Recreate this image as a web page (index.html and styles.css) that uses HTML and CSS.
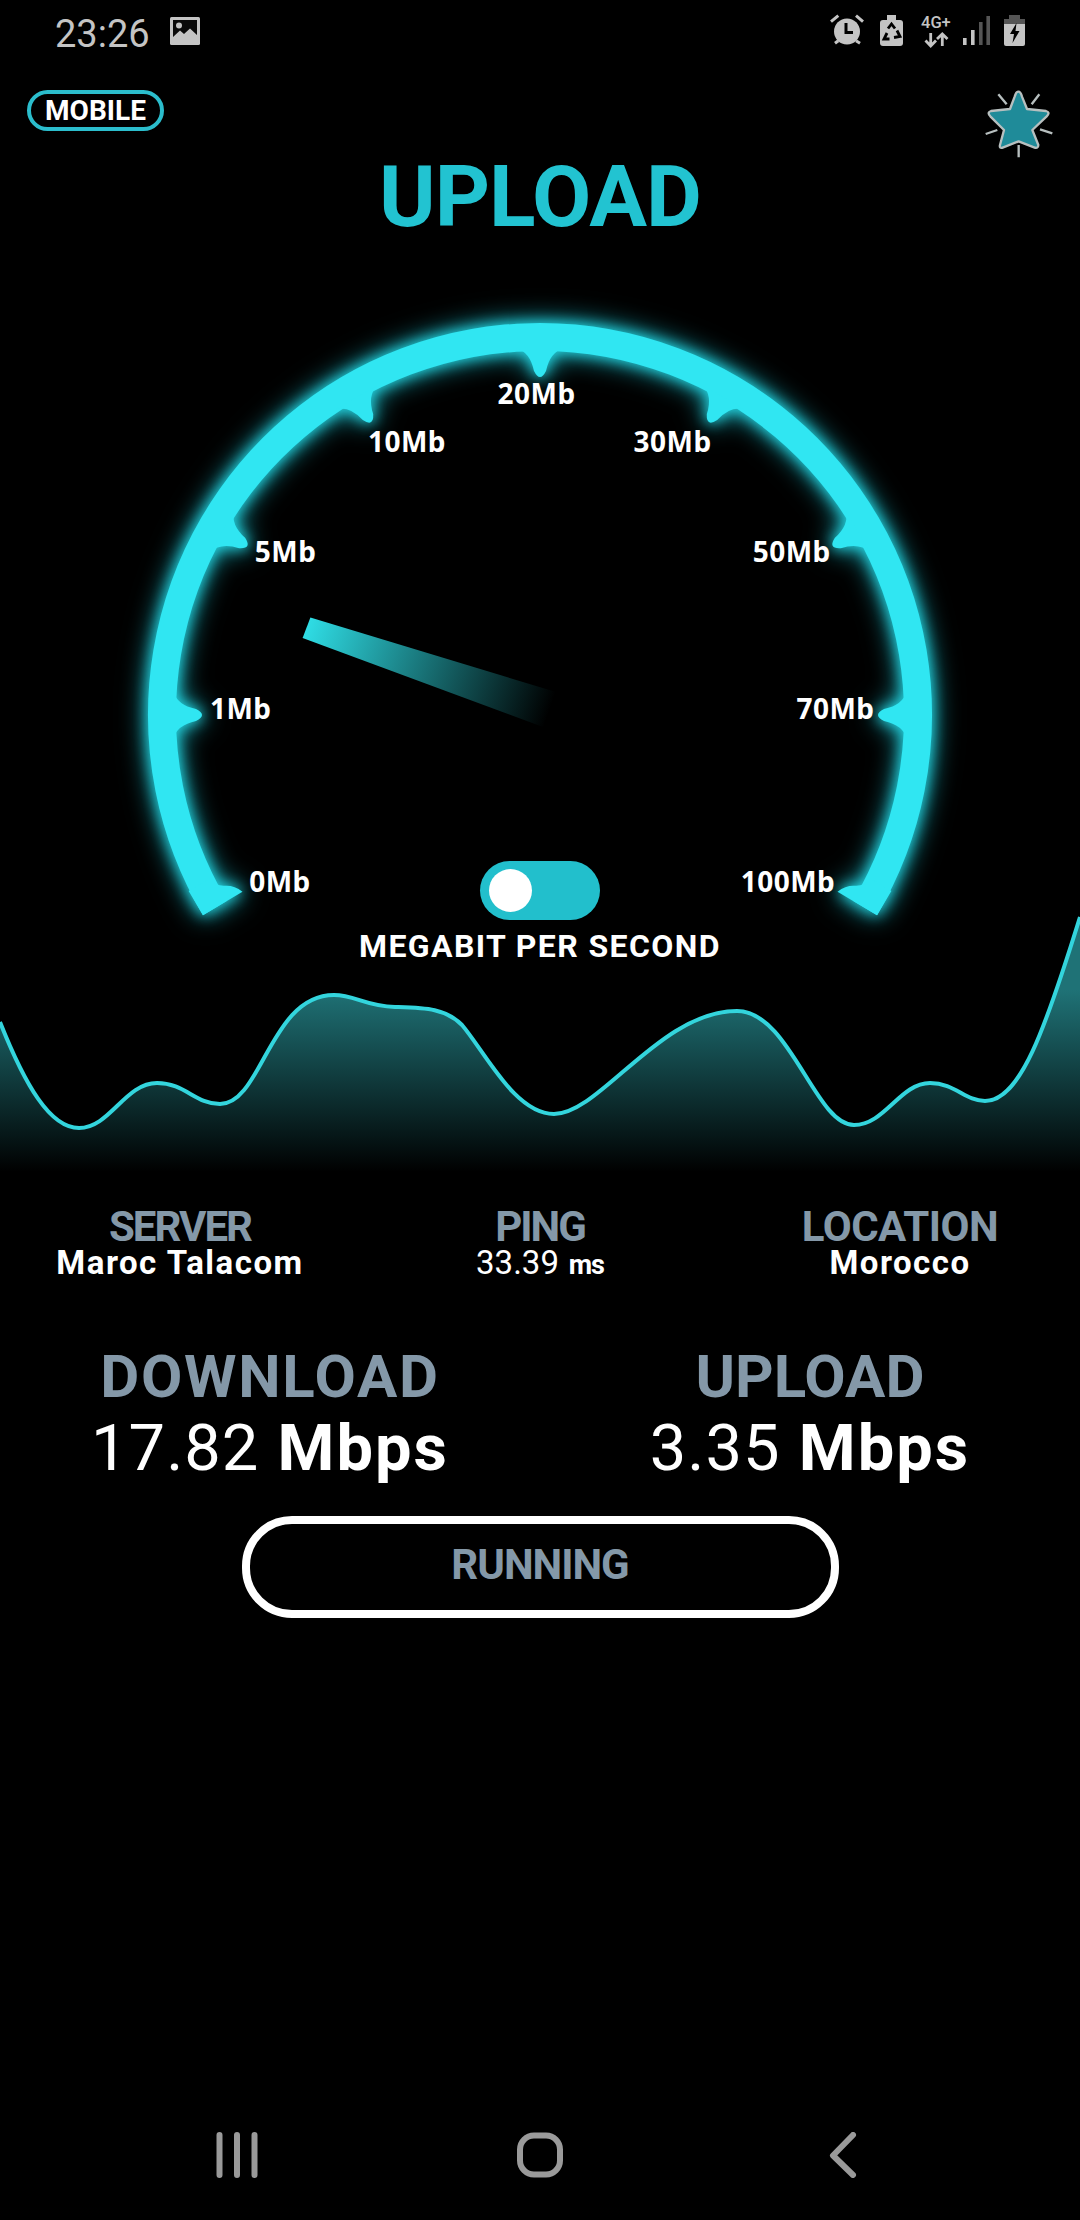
FILE: index.html
```html
<!DOCTYPE html>
<html lang="en">
<head>
<meta charset="utf-8">
<title>Speed test</title>
<link rel="stylesheet" href="styles.css">
</head>
<body>
<div class="screen">
  <header class="status">
    <div class="status-left">
      <span class="time">23:26</span>
      <svg class="ic-gallery" viewBox="0 0 30 28"><rect width="30" height="28" rx="1.5" fill="#c4c4c4"/><rect x="3" y="3" width="24" height="19" fill="#0a0a0a"/><circle cx="9" cy="8.5" r="3" fill="#c4c4c4"/><path d="M3 20 L10 13.5 L14 17 L20 11.5 L27 18 V23 H3 Z" fill="#c4c4c4"/></svg>
    </div>
    <div class="status-right">
      <svg class="ic-alarm" viewBox="0 0 39 32"><circle cx="16" cy="16.5" r="13" fill="#c4c4c4"/><path d="M15 8 V17.5 H22" fill="none" stroke="#000" stroke-width="3"/><path d="M0 6.7 L7.3 .7 M32 6.7 L25 .7 M4 28.3 L7.3 25.7 M29 28.3 L25 25.7" fill="none" stroke="#c4c4c4" stroke-width="3"/></svg>
      <svg class="ic-recycle" viewBox="0 0 31 32"><rect x="7" width="9" height="7" fill="#c4c4c4"/><rect y="5" width="23" height="26" rx="3" fill="#c4c4c4"/><path d="M8 13.5 L11.5 9 L15 13.5 M17 15.5 L20 21.5 L14 22.5 M9.5 24 H4 L7 18" fill="none" stroke="#000" stroke-width="2.8"/></svg>
      <svg class="ic-net" viewBox="0 0 31 32"><text class="net-label" x="0" y="13">4G+</text><path d="M9.7 18 V31 M4.5 25.5 L9.7 31 L15 25.5 M21.3 31 V19 M16 24 L21.3 19 L26.5 24" fill="none" stroke="#c4c4c4" stroke-width="2.8"/></svg>
      <svg class="ic-signal" viewBox="0 0 32 32"><rect x="1" y="23" width="3.6" height="7" fill="#c4c4c4"/><rect x="9" y="15" width="3.6" height="15" fill="#c4c4c4"/><rect x="17" y="7" width="3.6" height="23" fill="#555"/><rect x="24.4" y="1" width="3.6" height="29" fill="#555"/></svg>
      <svg class="ic-battery" viewBox="0 0 21 32"><rect x="5" width="11" height="6" fill="#555"/><rect y="4" width="21" height="6" fill="#555"/><path d="M0 9 H21 V29 a2 2 0 0 1 -2 2 H2 a2 2 0 0 1 -2 -2 Z" fill="#c4c4c4"/><path d="M12.5 8 L6 19 H10 L8.5 28 L15.5 16 H11.5 Z" fill="#000"/></svg>
    </div>
  </header>

  <div class="top-row">
    <div class="pill">MOBILE</div>
    <svg class="star" viewBox="612 268 210 208">
      <path class="star-shape" d="M715 275 Q722 275 726 290 L741 327 L798 333 Q812 337 800 349 L757 390 L775 435 Q775 447 762 442 L716 424 L670 442 Q657 447 660 435 L672 390 L631 349 Q620 337 633 333 L690 327 L704 290 Q708 275 715 275 Z"/>
      <path class="star-rays" d="M655 283 L680 313 M778 283 L755 313 M617 402 L652 390 M817 400 L780 388 M716 435 V472"/>
    </svg>
  </div>

  <h1 class="title">UPLOAD</h1>

  <section class="gauge">
    <svg class="gauge-svg" viewBox="-540 -415 1080 665">
      <defs>
        <linearGradient id="needle" gradientUnits="userSpaceOnUse" x1="-234" y1="-87" x2="10" y2="-5">
          <stop offset="0" stop-color="#2fdde5"/>
          <stop offset="1" stop-color="#2fdde5" stop-opacity="0"/>
        </linearGradient>
      </defs>
      <g class="dial">
        <path class="dial-arc" d="M-325 193 A378 378 0 1 1 325 193"/>
        <g class="ticks">
          <path transform="rotate(-90)" d="M-24 -367 Q-10 -363 -6 -344 Q0 -332 6 -344 Q10 -363 24 -367 Z"/>
          <path transform="rotate(-60)" d="M-24 -367 Q-10 -363 -6 -344 Q0 -332 6 -344 Q10 -363 24 -367 Z"/>
          <path transform="rotate(-30)" d="M-24 -367 Q-10 -363 -6 -344 Q0 -332 6 -344 Q10 -363 24 -367 Z"/>
          <path d="M-24 -367 Q-10 -363 -6 -344 Q0 -332 6 -344 Q10 -363 24 -367 Z"/>
          <path transform="rotate(30)" d="M-24 -367 Q-10 -363 -6 -344 Q0 -332 6 -344 Q10 -363 24 -367 Z"/>
          <path transform="rotate(60)" d="M-24 -367 Q-10 -363 -6 -344 Q0 -332 6 -344 Q10 -363 24 -367 Z"/>
          <path transform="rotate(90)" d="M-24 -367 Q-10 -363 -6 -344 Q0 -332 6 -344 Q10 -363 24 -367 Z"/>
          <path transform="rotate(-120.7)" d="M0 -392 V-346 Q10 -350 14 -358 Q18 -366 28 -368 V-392 Z"/>
          <path transform="rotate(120.7)" d="M0 -392 V-346 Q-10 -350 -14 -358 Q-18 -366 -28 -368 V-392 Z"/>
        </g>
      </g>
      <path class="needle" d="M-229.6 -97.6 L-237.4 -77 L3 12 L16 -23 Z"/>
      <g class="scale">
        <text x="-260" y="177">0Mb</text>
        <text x="-299.3" y="3.5">1Mb</text>
        <text x="-254.4" y="-153">5Mb</text>
        <text x="-133" y="-263">10Mb</text>
        <text x="-3.4" y="-311">20Mb</text>
        <text x="132.6" y="-263">30Mb</text>
        <text x="251.7" y="-153">50Mb</text>
        <text x="295.5" y="3.5">70Mb</text>
        <text x="248" y="177">100Mb</text>
      </g>
    </svg>
    <div class="unit">
      <div class="toggle"><span class="knob"></span></div>
      <div class="unit-label">MEGABIT PER SECOND</div>
    </div>
  </section>

  <svg class="chart" viewBox="0 900 1080 280">
    <defs>
      <linearGradient id="chart-fill" gradientUnits="userSpaceOnUse" x1="0" y1="990" x2="0" y2="1172">
        <stop offset="0" stop-color="#1f7276"/>
        <stop offset="1" stop-color="#000"/>
      </linearGradient>
    </defs>
    <path class="chart-area" d="M0 1022 C25 1085 50 1128 79 1128 C110 1128 125 1083 157 1083 C185 1083 195 1104 220 1104 C262 1104 270 995 334 995 C355 995 365 1006 395 1007 C425 1008 445 1008 462 1025 C485 1052 515 1114 554 1114 C600 1114 660 1011 737 1011 C790 1011 815 1125 854 1125 C885 1125 900 1083 930 1083 C955 1083 965 1101 985 1101 C1020 1101 1045 1030 1080 917 V1180 H0 Z"/>
    <path class="chart-line" d="M0 1022 C25 1085 50 1128 79 1128 C110 1128 125 1083 157 1083 C185 1083 195 1104 220 1104 C262 1104 270 995 334 995 C355 995 365 1006 395 1007 C425 1008 445 1008 462 1025 C485 1052 515 1114 554 1114 C600 1114 660 1011 737 1011 C790 1011 815 1125 854 1125 C885 1125 900 1083 930 1083 C955 1083 965 1101 985 1101 C1020 1101 1045 1030 1080 917"/>
  </svg>

  <section class="stats">
    <div class="stat">
      <div class="stat-label">SERVER</div>
      <div class="stat-value">Maroc Talacom</div>
    </div>
    <div class="stat">
      <div class="stat-label">PING</div>
      <div class="stat-value"><span class="num">33.39</span> <span class="ms">ms</span></div>
    </div>
    <div class="stat">
      <div class="stat-label stat-label-wide">LOCATION</div>
      <div class="stat-value">Morocco</div>
    </div>
  </section>

  <section class="speeds">
    <div class="speed">
      <div class="speed-label speed-label-wide">DOWNLOAD</div>
      <div class="speed-value"><span class="num">17.82</span> Mbps</div>
    </div>
    <div class="speed">
      <div class="speed-label">UPLOAD</div>
      <div class="speed-value"><span class="num">3.35</span> Mbps</div>
    </div>
  </section>

  <div class="run-button">RUNNING</div>

  <nav class="nav">
    <svg class="nav-icon" viewBox="0 0 60 46"><path d="M12.5 3 V43 M30 3 V43 M47.5 3 V43"/></svg>
    <svg class="nav-icon" viewBox="0 0 60 46"><rect x="10" y="3.5" width="40" height="39" rx="14"/></svg>
    <svg class="nav-icon" viewBox="0 0 60 46"><path d="M40 3 L20 23.5 L40 43"/></svg>
  </nav>
</div>
</body>
</html>
```
FILE: styles.css
```css
* { box-sizing: border-box; }
html, body { margin: 0; padding: 0; background: #000; }
.screen {
  width: 1080px;
  height: 2220px;
  background: #000;
  display: flex;
  flex-direction: column;
  overflow: hidden;
  font-family: Roboto, "Liberation Sans", sans-serif;
  color: #fff;
}

/* status bar */
.status {
  height: 89px;
  padding: 15px 55px 0;
  display: flex;
  justify-content: space-between;
  align-items: flex-start;
}
.status-left { display: flex; align-items: flex-start; gap: 20px; }
.time { font-size: 38px; line-height: 38px; color: #c4c4c4; }
.ic-gallery { width: 30px; height: 28px; margin-top: 2px; }
.status-right { display: flex; gap: 10px; }
.status-right svg { overflow: visible; }
.ic-alarm { width: 39px; height: 32px; }
.ic-recycle { width: 31px; height: 32px; }
.ic-net { width: 31px; height: 32px; }
.ic-signal { width: 32px; height: 32px; }
.ic-battery { width: 21px; height: 32px; }
.net-label { font-size: 16.5px; font-weight: 500; fill: #c4c4c4; }

/* top row */
.top-row {
  display: flex;
  justify-content: space-between;
  align-items: flex-start;
  padding: 0 26px 0 27px;
}
.pill {
  width: 137px;
  height: 41px;
  margin-top: 1px;
  border: 4px solid #2bbdcc;
  border-radius: 21px;
  display: flex;
  align-items: center;
  justify-content: center;
  font-size: 28px;
  font-weight: 700;
  line-height: 1;
}
.star { width: 70px; height: 70px; }
.star-shape { fill: #1f8b99; stroke: #b7bfbf; stroke-width: 7; stroke-linejoin: round; }
.star-rays { fill: none; stroke: #b7bfbf; stroke-width: 7; }

.title {
  margin: -5px 0 60px;
  text-align: center;
  font-size: 86px;
  line-height: 86px;
  font-weight: 700;
  letter-spacing: -1px;
  color: #22c3d1;
}

/* gauge */
.gauge {
  position: relative;
  height: 665px;
}
.gauge-svg { display: block; width: 1080px; height: 665px; overflow: visible; }
.dial { fill: #30e6f2; filter: drop-shadow(0 0 7px #25d8e4) drop-shadow(0 0 12px #18a8b4); }
.dial-arc { fill: none; stroke: #30e6f2; stroke-width: 28; }
.needle { fill: url(#needle); }
.scale text {
  font-family: "Noto Sans", sans-serif;
  font-size: 28px;
  font-weight: 700;
  letter-spacing: .5px;
  fill: #fff;
  text-anchor: middle;
}
.unit {
  position: absolute;
  left: 0;
  right: 0;
  top: 561px;
  display: flex;
  flex-direction: column;
  align-items: center;
}
.toggle {
  width: 120px;
  height: 59px;
  border-radius: 30px;
  background: #22bfcc;
  display: flex;
  align-items: center;
  padding-left: 9px;
}
.knob { width: 43px; height: 43px; border-radius: 50%; background: #fff; }
.unit-label {
  margin-top: 8px;
  font-size: 32px;
  line-height: 36px;
  font-weight: 700;
  letter-spacing: 1.4px;
  white-space: nowrap;
}

/* chart */
.chart { display: block; width: 1080px; height: 280px; margin-top: -65px; flex: none; }
.chart-area { fill: url(#chart-fill); }
.chart-line { fill: none; stroke: #33d5dd; stroke-width: 4; }

/* stats */
.stats {
  display: grid;
  grid-template-columns: repeat(3, 1fr);
  margin-top: 28px;
  text-align: center;
}
.stat-label {
  font-size: 42px;
  line-height: 38px;
  font-weight: 700;
  letter-spacing: -2px;
  color: #8498a8;
}
.stat-label-wide { letter-spacing: -.5px; }
.stat-value {
  font-size: 33px;
  line-height: 33px;
  font-weight: 700;
  letter-spacing: 1.5px;
}
.num { font-weight: 400; letter-spacing: 0; }
.ms { font-size: 27px; letter-spacing: -1px; }

/* speeds */
.speeds {
  display: grid;
  grid-template-columns: repeat(2, 1fr);
  margin-top: 65px;
  text-align: center;
}
.speed-label {
  font-size: 60px;
  line-height: 60px;
  font-weight: 700;
  color: #8498a8;
}
.speed-label-wide { letter-spacing: 1.7px; }
.speed-value {
  margin-top: 9px;
  font-size: 65px;
  line-height: 65px;
  font-weight: 700;
  letter-spacing: 2px;
}
.speed-value .num { letter-spacing: 1px; }

.run-button {
  align-self: center;
  width: 597px;
  height: 102px;
  margin-top: 35px;
  padding-bottom: 6px;
  border: 8px solid #fff;
  border-radius: 50px;
  display: flex;
  align-items: center;
  justify-content: center;
  font-size: 42px;
  font-weight: 700;
  letter-spacing: -1px;
  color: #8498a8;
}

/* nav */
.nav {
  margin-top: auto;
  margin-bottom: 42px;
  padding: 0 86px;
  display: grid;
  grid-template-columns: repeat(3, 1fr);
  justify-items: center;
}
.nav-icon { width: 60px; height: 46px; fill: none; stroke: #9a9a9a; stroke-width: 6; stroke-linecap: round; stroke-linejoin: round; }
```
